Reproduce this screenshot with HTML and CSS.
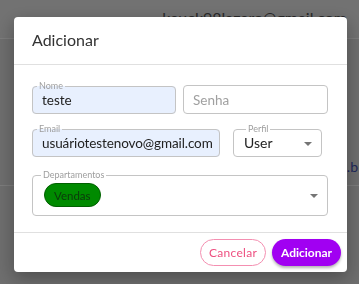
FILE: index.html
```html
<!DOCTYPE html>
<html lang="pt-BR">
<head>
    <meta charset="UTF-8">
    <meta name="viewport" content="width=device-width, initial-scale=1.0">
    <title>Usuários</title>
    <link rel="stylesheet" href="styles.css">
</head>
<body>
    <div class="page">
        <div class="topbar">
            <span class="user-email">kauck98lazaro@gmail.com</span>
        </div>
        <div class="list-row">
            <span class="cell-end">.b</span>
        </div>
    </div>

    <div class="backdrop">
        <div class="dialog">
            <h2 class="dialog-title">Adicionar</h2>

            <div class="dialog-content">
                <div class="row">
                    <fieldset class="field filled field-nome">
                        <legend>Nome</legend>
                        <input class="field-input" type="text" value="teste">
                    </fieldset>
                    <fieldset class="field field-senha">
                        <input class="field-input" type="password" placeholder="Senha">
                    </fieldset>
                </div>

                <div class="row">
                    <fieldset class="field filled field-email">
                        <legend>Email</legend>
                        <input class="field-input" type="text" value="usuáriotestenovo@gmail.com">
                    </fieldset>
                    <fieldset class="field field-perfil">
                        <legend>Perfil</legend>
                        <div class="select">
                            <span>User</span>
                            <svg class="arrow" width="8" height="4" viewBox="0 0 8 4"><path d="M0 0h8L4 4z" fill="#757575"/></svg>
                        </div>
                    </fieldset>
                </div>

                <fieldset class="field field-deps">
                    <legend>Departamentos</legend>
                    <div class="select">
                        <span class="chip">Vendas</span>
                        <svg class="arrow" width="8" height="4" viewBox="0 0 8 4"><path d="M0 0h8L4 4z" fill="#757575"/></svg>
                    </div>
                </fieldset>
            </div>

            <div class="dialog-actions">
                <button class="btn btn-outline">Cancelar</button>
                <button class="btn btn-primary">Adicionar</button>
            </div>
        </div>
    </div>
</body>
</html>
```

FILE: styles.css
```css
body {
    font-family: Lato, "Open Sans", sans-serif;
    background-color: #dcdcdc;
    margin: 0;
    padding: 0;
}
.page {
    height: 284px;
}
.topbar {
    height: 38px;
    background-color: #e4e4e4;
    border-bottom: 1px solid #f8f8f8;
    text-align: right;
}
.user-email {
    display: inline-block;
    margin-top: 8px;
    margin-right: 12px;
    font-size: 16px;
    color: #555;
}
.list-row {
    height: 146px;
    border-bottom: 1px solid #f8f8f8;
    text-align: right;
}
.cell-end {
    display: inline-block;
    margin-top: 119px;
    margin-right: 1px;
    font-size: 14px;
    color: #3f51b5;
}
.backdrop {
    position: fixed;
    top: 0;
    left: 0;
    right: 0;
    bottom: 0;
    background-color: rgba(0, 0, 0, 0.5);
    padding: 17px 12px 0 14px;
}
.dialog {
    width: 333px;
    background-color: white;
    border-radius: 4px;
    box-shadow: 0 6px 18px rgba(0, 0, 0, 0.3);
}
.dialog-title {
    margin: 0;
    padding: 13px 18px 14px;
    font-size: 16px;
    line-height: 20px;
    font-weight: 400;
    color: #333;
    border-bottom: 1px solid #e0e0e0;
}
.dialog-content {
    padding: 16px 19px 16px 18px;
    display: flex;
    flex-direction: column;
    gap: 10px;
}
.row {
    display: flex;
    align-items: flex-end;
    gap: 7px;
}
.field {
    margin: 0;
    padding: 0 9px;
    border: 1px solid #c4c4c4;
    border-radius: 4px;
    min-width: 0;
}
.field legend {
    font-size: 9px;
    line-height: 10px;
    color: #9e9e9e;
    padding: 0 2px;
    margin-left: -5px;
}
.field legend + * {
    margin-top: -5px;
}
.filled {
    background-color: #e8f0fe;
}
.field-input {
    display: block;
    width: 100%;
    height: 27px;
    border: none;
    outline: none;
    padding: 0;
    background: transparent;
    font-family: Lato, "Open Sans", sans-serif;
    font-size: 13.5px;
    color: #222;
}
.field-input::placeholder {
    color: #a0a0a0;
}
.field-nome {
    width: 144px;
    box-sizing: border-box;
}
.field-senha {
    flex: 1;
}
.field-email {
    width: 188px;
    box-sizing: border-box;
    padding-right: 4px;
}
.field-email .field-input {
    letter-spacing: -0.1px;
}
.row + .row {
    gap: 13px;
}
.field-perfil {
    width: 89px;
    box-sizing: border-box;
    padding: 0 9px 0 10px;
}
.field-perfil legend {
    margin-left: 2px;
}
.select {
    display: flex;
    align-items: center;
    justify-content: space-between;
    height: 27px;
    font-size: 14px;
    color: #222;
}
.arrow {
    margin-top: 2px;
}
.field-deps {
    margin-top: 3px;
    padding: 0 9px 0 11px;
}
.field-deps legend {
    margin-left: -3px;
}
.field-deps .select {
    height: 40px;
}
.chip {
    display: inline-flex;
    align-items: center;
    height: 22px;
    padding: 0 9px;
    border-radius: 12px;
    background-color: #008a00;
    border: 1px solid #006000;
    color: #0b3a0b;
    font-size: 11.5px;
}
.dialog-actions {
    display: flex;
    justify-content: flex-end;
    gap: 6px;
    padding: 6px 6px 6px;
    border-top: 1px solid #e0e0e0;
}
.btn {
    height: 27px;
    border-radius: 14px;
    font-family: Lato, "Open Sans", sans-serif;
    font-size: 12px;
    cursor: pointer;
}
.btn-outline {
    width: 66px;
    background-color: white;
    border: 1px solid #f48fb1;
    color: #ee4f80;
    letter-spacing: 0.3px;
}
.btn-primary {
    width: 69px;
    background-color: #a100f2;
    border: none;
    color: white;
    font-weight: 700;
    box-shadow: 0 2px 3px rgba(0, 0, 0, 0.3);
}
```
